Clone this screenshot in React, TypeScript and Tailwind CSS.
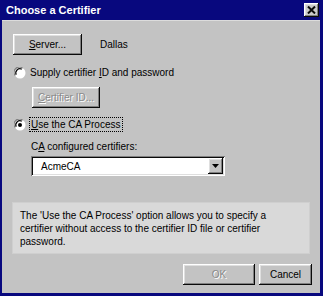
const raised =
  'shadow-[inset_-1px_-1px_#0a0a0a,inset_1px_1px_#ffffff,inset_-2px_-2px_#808080,inset_2px_2px_#dfdfdf]'
const sunken =
  'shadow-[inset_1px_1px_#808080,inset_-1px_-1px_#ffffff,inset_2px_2px_#0a0a0a,inset_-2px_-2px_#dfdfdf]'
const disabled = 'text-[#8a8a8a] [text-shadow:1px_1px_0_#ffffff]'

function Radio({ checked }: { checked?: boolean }) {
  return (
    <svg width="12" height="12" viewBox="0 0 12 12" className="shrink-0">
      <circle cx="6" cy="6" r="5.5" fill="#ffffff" />
      <path d="M1.2 8.5 A5.2 5.2 0 0 1 8.5 1.2" stroke="#808080" strokeWidth="1.2" fill="none" />
      <path d="M2.2 7.8 A4.2 4.2 0 0 1 7.8 2.2" stroke="#0a0a0a" strokeWidth="1.2" fill="none" />
      {checked && <circle cx="6" cy="6" r="2" fill="#000000" />}
    </svg>
  )
}

function Btn({ w, children, off }: { w: string; children: React.ReactNode; off?: boolean }) {
  return (
    <div
      className={`${w} h-[21px] shrink-0 bg-[#c3c3c3] ${raised} flex items-center justify-center ${
        off ? disabled : 'text-black'
      }`}
    >
      {children}
    </div>
  )
}

export default function App() {
  return (
    <div
      className="w-[323px] h-[296px] flex flex-col bg-[#08087e] pl-[2px] pr-[3px] pb-[3px]"
      style={{ fontFamily: '"Liberation Sans", Arial, sans-serif' }}
    >
      {/* title bar */}
      <div className="h-[20px] -ml-[2px] -mr-[3px] flex items-center justify-between pl-[6px] pr-[4px] shrink-0">
        <span className="text-white font-bold text-[11px]">Choose a Certifier</span>
        <div className={`w-[15px] h-[14px] bg-[#cacaca] ${raised} flex items-center justify-center`}>
          <svg width="9" height="8" viewBox="0 0 9 8">
            <path d="M1 0.5 L8 7.5 M8 0.5 L1 7.5" stroke="#0a0a0a" strokeWidth="2" />
          </svg>
        </div>
      </div>

      {/* body */}
      <div className="flex-1 bg-[#c3c3c3] flex flex-col text-[10px] leading-[13px] text-black border-t border-[#dcdcdc]">
        <div className="flex items-center mt-[13px] ml-[11px] gap-[18px]">
          <Btn w="w-[69px]">
            <span>
              <span className="underline">S</span>erver...
            </span>
          </Btn>
          <span>Dallas</span>
        </div>

        <div className="flex items-center h-[13px] mt-[11px] ml-[12px] gap-[4px]">
          <Radio />
          <span>
            Supply certifier <span className="underline">I</span>D and password
          </span>
        </div>

        <div className="mt-[8px] ml-[30px]">
          <Btn w="w-[68px]" off>
            <span>
              <span className="underline">C</span>ertifier ID...
            </span>
          </Btn>
        </div>

        <div className="flex items-center h-[15px] mt-[9px] ml-[12px] gap-[3px]">
          <Radio checked />
          <span className="border border-dotted border-black px-[1px]">
            <span className="underline">U</span>se the CA Process
          </span>
        </div>

        <div className="mt-[8px] ml-[29px]">
          C<span className="underline">A</span> configured certifiers:
        </div>

        <div className={`mt-[3px] ml-[29px] w-[194px] h-[20px] bg-white ${sunken} flex items-center pl-[10px] pr-[2px]`}>
          <span className="flex-1">AcmeCA</span>
          <div className={`w-[15px] h-[16px] bg-[#c3c3c3] ${raised} flex items-center justify-center`}>
            <svg width="7" height="4" viewBox="0 0 7 4">
              <path d="M0 0 H7 L3.5 4 Z" fill="#000000" />
            </svg>
          </div>
        </div>

        <div className="mt-[26px] ml-[10px] w-[298px] h-[52px] bg-[#d9d9d9] border border-[#cfcfcf] pl-[7px] pr-[30px] pt-[6px]">
          The 'Use the CA Process' option allows you to specify a certifier without access to the certifier ID file or
          certifier password.
        </div>

        <div className="flex justify-end gap-[4px] mt-[10px] mr-[8px]">
          <Btn w="w-[72px]" off>
            OK
          </Btn>
          <Btn w="w-[53px]">Cancel</Btn>
        </div>
      </div>
    </div>
  )
}
